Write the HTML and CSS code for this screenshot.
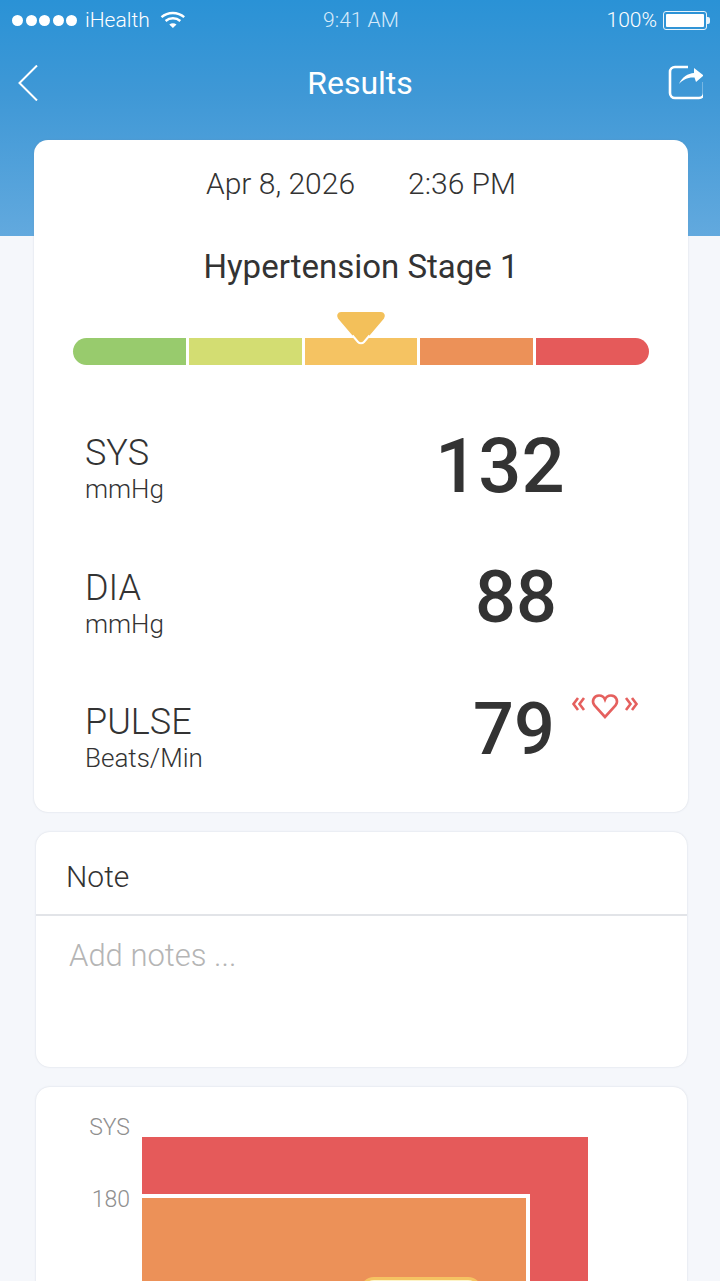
FILE: index.html
```html
<!DOCTYPE html>
<html lang="en">
<head>
<meta charset="utf-8">
<title>Results</title>
<link rel="stylesheet" href="styles.css">
</head>
<body>
<div class="page">
  <header class="hero">
    <div class="status">
      <div class="status-left">
        <span class="dots"><i></i><i></i><i></i><i></i><i></i></span>
        <span>iHealth</span>
        <svg class="wifi" width="26" height="18" viewBox="0 0 26 18"><path d="M1.5 6.2C7.8.6 17.8.6 24.2 6.2" fill="none" stroke="#fff" stroke-width="2.4"/><path d="M5.6 10c4.2-3.6 10.500-3.600 14.700 0" fill="none" stroke="#fff" stroke-width="2.400"/><path d="M9.300 13.400c2.200-1.700 5-1.700 7.200 0L12.900 17z" fill="#fff"/></svg>
      </div>
      <div class="status-time">9:41 AM</div>
      <div class="status-right">
        <span>100%</span>
        <span class="battery"><span class="battery-fill"></span></span>
        <span class="battery-cap"></span>
      </div>
    </div>
    <div class="nav">
      <svg class="nav-icon" width="36" height="36" viewBox="0 0 36 36"><path d="M20 .5 2.500 18 20 35.500" transform="translate(0 0)" fill="none" stroke="#fff" stroke-width="2"/></svg>
      <h1>Results</h1>
      <svg class="nav-icon" width="36" height="36" viewBox="0 0 36 36"><path d="M21 2H8a5 5 0 0 0-5 5v21a5 5 0 0 0 5 5h24a5 5 0 0 0 5-5V17" fill="none" stroke="#fff" stroke-width="2.600"/><path d="M12 19c3-7 9-10.500 15-11V3l9.500 7.500L29 17l-1.500-4.500C21 12 16 14.500 12 19z" fill="#fff"/></svg>
    </div>
  </header>

  <main class="cards">
    <section class="card result">
      <div class="when"><span>Apr 8, 2026</span><span>2:36 PM</span></div>
      <div class="stage">Hypertension Stage 1</div>
      <div class="scale">
        <span class="seg seg-1"></span>
        <span class="seg seg-2"></span>
        <span class="seg seg-3"></span>
        <span class="seg seg-4"></span>
        <span class="seg seg-5"></span>
        <svg class="pointer" width="58" height="40" viewBox="0 0 58 40"><path d="M9 3h40a4 4 0 0 1 3 6.500L32 33a4 4 0 0 1-6 0L6 9.500A4 4 0 0 1 9 3z" fill="#f3c05a" stroke="#fff" stroke-width="0"/><path d="M20.500 26.500 26 33a4 4 0 0 0 6 0l5.500-6.500" fill="none" stroke="#fff" stroke-width="2"/></svg>
      </div>
      <div class="metrics">
        <div class="metric">
          <div class="metric-label"><div class="name">SYS</div><div class="unit">mmHg</div></div>
          <div class="value value-sys">132</div>
        </div>
        <div class="metric">
          <div class="metric-label"><div class="name">DIA</div><div class="unit">mmHg</div></div>
          <div class="value value-dia">88</div>
        </div>
        <div class="metric">
          <div class="metric-label"><div class="name">PULSE</div><div class="unit">Beats/Min</div></div>
          <div class="value value-pulse">79</div>
          <svg class="heart" width="68" height="28" viewBox="0 0 68 28"><g fill="none" stroke="#e5605e" stroke-width="2.600"><path d="M21 14.500c-3-3-7-6.500-7-10C14 1.500 19 0 21 0"  opacity="0"/><path d="M34 25 23.500 13.500C20 9 23 3.500 28 3.500c3 0 5 1.500 6 4 1-2.500 3-4 6-4 5 0 8 5.500 4.500 10z"/><path d="M7 6 2.500 12 7 18M13 6 8.500 12 13 18M55 6l4.500 6L55 18M61 6l4.500 6L61 18"/></g></svg>
        </div>
      </div>
    </section>

    <section class="card note">
      <div class="note-title">Note</div>
      <div class="note-body">Add notes ...</div>
    </section>

    <section class="card chart">
      <div class="axis"><span>SYS</span><span>180</span></div>
      <div class="zones">
        <div class="zone-orange"><div class="zone-marker"></div></div>
      </div>
    </section>
  </main>
</div>
</body>
</html>
```

FILE: styles.css
```css
* { box-sizing: border-box; }
html, body { margin: 0; padding: 0; }
body {
  background: #f5f7fb;
  font-family: Roboto, "Liberation Sans", sans-serif;
  color: #333;
}
.page { height: 1281px; overflow: hidden; }

.hero {
  height: 236px;
  background: linear-gradient(180deg, #2a92d6 0%, #3f98d6 40%, #62a9de 100%);
  color: #fff;
}
.status {
  height: 40px;
  padding: 0 10px 0 12px;
  display: grid;
  grid-template-columns: 1fr auto 1fr;
  align-items: center;
  font-size: 21px;
  font-weight: 300;
}
.status-left { display: flex; align-items: center; gap: 8px; }
.dots { display: flex; gap: 2.500px; }
.dots i { width: 11px; height: 11px; border-radius: 50%; background: #fff; display: block; }
.wifi { margin-left: 2px; }
.status-time { color: #d6eafa; }
.status-right { display: flex; align-items: center; justify-content: flex-end; gap: 6px; }
.battery { width: 44px; height: 19px; border: 1.500px solid #e8f3fb; border-radius: 3px; padding: 2px; display: block; }
.battery-fill { display: block; height: 100%; background: #fff; border-radius: 1px; }
.battery-cap { width: 3px; height: 7px; background: #e8f3fb; border-radius: 0 2px 2px 0; margin-left: -6px; }

.nav {
  height: 86px;
  padding: 0 17px 0 17px;
  display: flex;
  align-items: center;
  justify-content: space-between;
}
h1 { margin: 0; font-size: 32px; font-weight: 400; line-height: 1; }

.cards {
  margin-top: -96px;
  padding: 0 32px 0 34px;
  display: flex;
  flex-direction: column;
  gap: 20px;
}
.card {
  background: #fff;
  border-radius: 14px;
  box-shadow: 0 0 2px rgba(120, 130, 150, .28);
}
.result { height: 672px; padding-top: 26px; }
.note, .chart { margin: 0 1px 0 2px; }

.when {
  display: flex;
  justify-content: center;
  gap: 53px;
  font-size: 30px;
  font-weight: 300;
  line-height: 36px;
  padding-right: 0;
}
.stage {
  margin-top: 45px;
  text-align: center;
  font-size: 33px;
  font-weight: 400;
  line-height: 40px;
}
.scale {
  position: relative;
  margin: 51px 39px 0;
  height: 27px;
  display: flex;
  gap: 3px;
}
.seg { flex: 1; height: 100%; }
.seg-1 { background: #98cb6d; border-radius: 14px 0 0 14px; }
.seg-2 { background: #d3dd72; }
.seg-3 { background: #f5c362; }
.seg-4 { background: #ec9158; }
.seg-5 { background: #e55a5a; border-radius: 0 14px 14px 0; }
.pointer { position: absolute; left: 259px; top: -29px; }

.metrics { margin-top: 40px; padding: 0 51px; display: flex; flex-direction: column; }
.metric { position: relative; height: 134.500px; display: flex; align-items: flex-start; }
.metric-label { width: 300px; padding-top: 27px; }
.name { font-size: 36px; font-weight: 300; line-height: 42px; }
.unit { font-size: 26px; font-weight: 300; line-height: 30px; }
.value { font-weight: 500; line-height: 1; color: #333; }
.value-sys { font-size: 76px; margin-left: 50px; padding-top: 23px; }
.value-dia { font-size: 72px; margin-left: 90px; padding-top: 22px; }
.value-pulse { font-size: 72px; margin-left: 88px; padding-top: 20px; }
.heart { position: absolute; left: 486px; top: 0; margin-top: 18px; }

.note { height: 235px; }
.note-title {
  height: 84px;
  padding: 27px 0 0 30px;
  font-size: 30px;
  font-weight: 300;
  line-height: 36px;
  border-bottom: 2px solid #e2e4e8;
}
.note-body { padding: 22px 0 0 33px; font-size: 31px; font-weight: 300; color: #b5b5b5; line-height: 36px; }

.chart { height: 260px; position: relative; display: flex; padding: 50px 0 0 106px; }
.axis { position: absolute; left: 0; top: 27px; width: 94px; text-align: right; font-size: 23px; font-weight: 300; color: #8f8f8f; display: flex; flex-direction: column; gap: 44px; line-height: 28px; }
.zones { width: 446px; height: 220px; background: #e55a5a; }
.zone-orange { position: relative; width: 388px; height: 200px; margin-top: 57px; background: #ec9158; border-top: 4px solid #fff; border-right: 4px solid #fff; }
.zone-marker { position: absolute; left: 218px; top: 79px; width: 122px; height: 30px; background: #fdf4c8; border: 3px solid #f5c362; border-radius: 14px; }
```
